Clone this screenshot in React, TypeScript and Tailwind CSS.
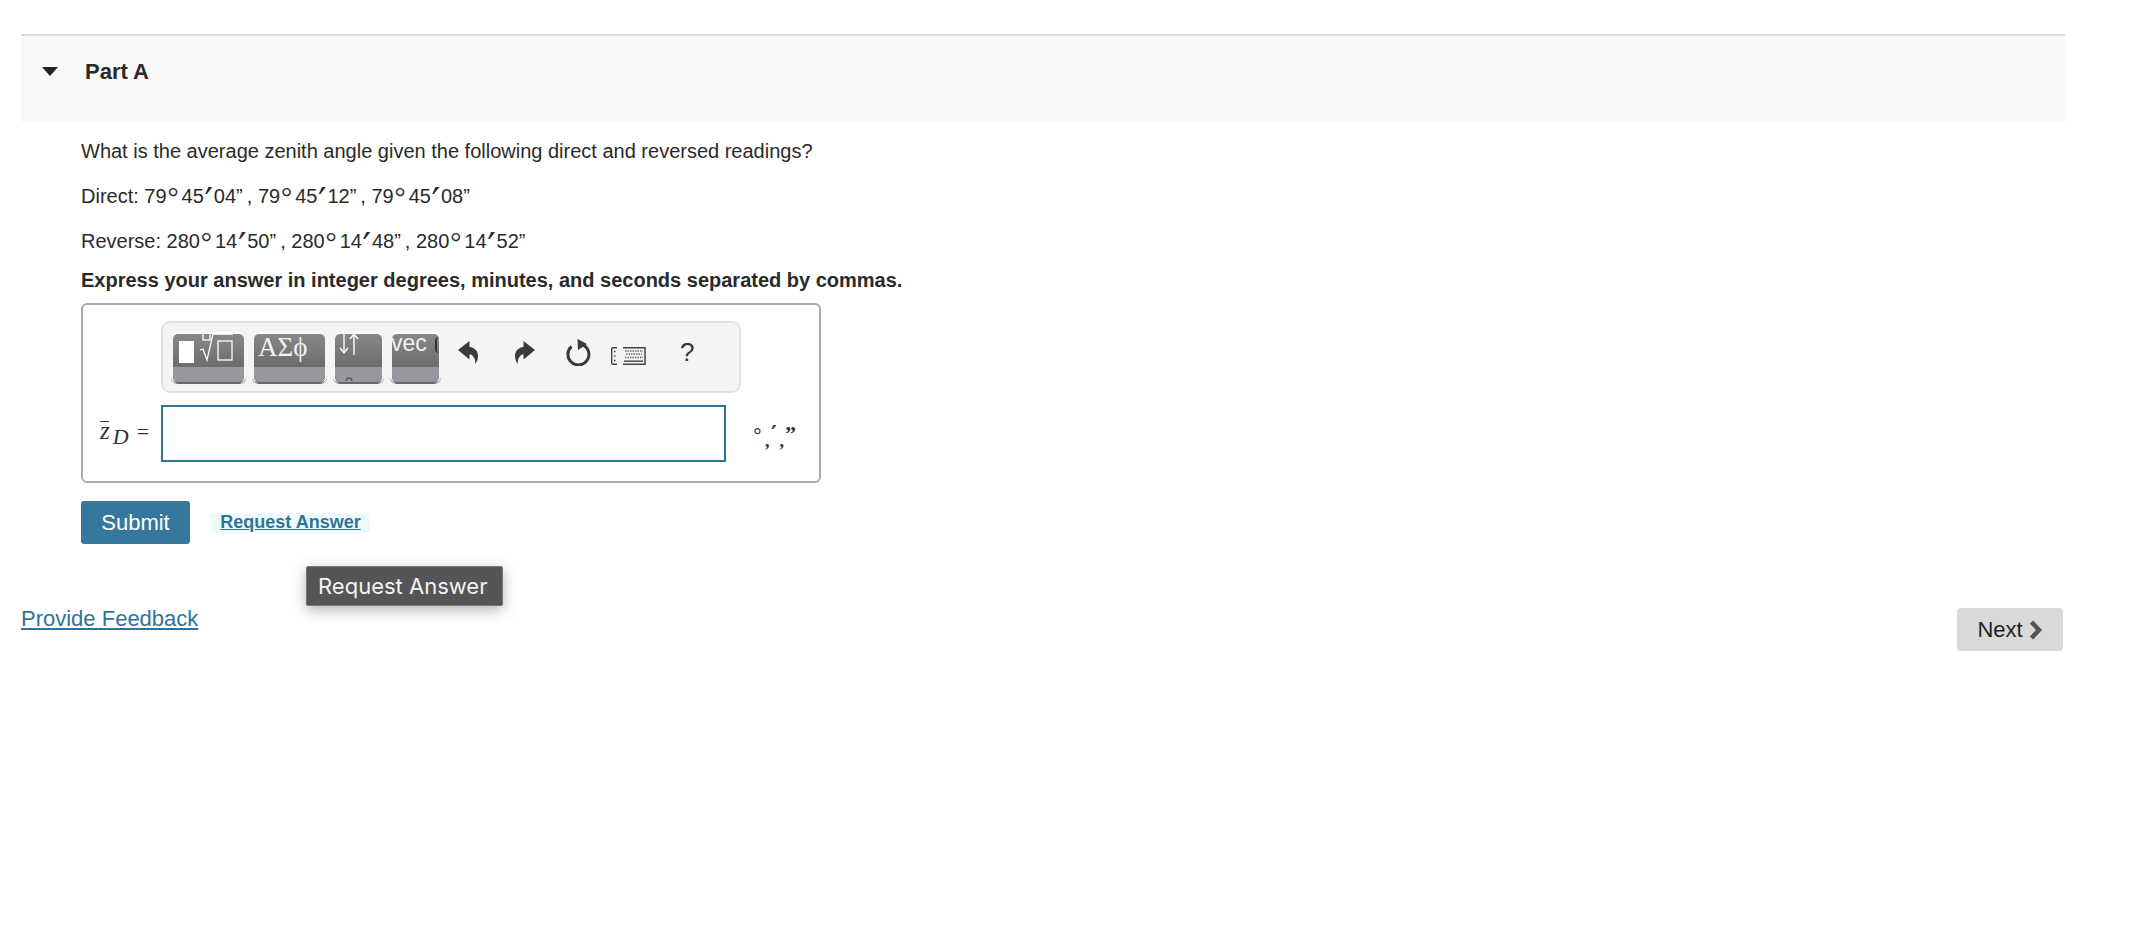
function Reading({ d, m, s }: { d: string; m: string; s: string }) {
  return (
    <span>
      {d}
      <span className="relative top-[3px] inline-block w-[15px] pr-[2px] text-center font-['Liberation_Serif',serif] text-[28px] leading-[10px]">°</span>
      {m}
      <span className="relative top-[11px] inline-block w-[10px] text-center font-['DejaVu_Sans',sans-serif] text-[38px] leading-[10px]">′</span>
      {s}
      <span className="mr-[4px]">”</span>
    </span>
  );
}

function ToolButton({ width, children }: { width: string; children: React.ReactNode }) {
  return (
    <div className={`${width} relative h-[51px] shrink-0 overflow-hidden rounded-[7px] border-x-2 border-t-2 border-x-[#f6f6f6] border-t-white bg-[linear-gradient(#88888b,#5e5e5e)] shadow-[0_1px_0_#6a6a6a]`}>
      {children}
      <div className="absolute bottom-[1px] left-0 right-0 h-[15px] rounded-b-[5px] bg-[#98969f]" />
      <div className="absolute bottom-0 left-0 right-0 h-[1px] bg-[#666]" />
    </div>
  );
}

function UndoIcon() {
  return (
    <svg width="20" height="23" viewBox="0 0 20 23">
      <path d="M0 9L11.5 0v6C17 6.5 20 10.5 20 15c0 3-1 6-3 8 .6-3-.2-6-1.800-7.600C14 14 13 13.500 11.500 13.300V18.500z" fill="#3a3a3a" />
    </svg>
  );
}

function RedoIcon() {
  return (
    <svg width="20" height="23" viewBox="0 0 20 23">
      <path d="M20 9L8.500 0v6C3 6.500 0 10.500 0 15c0 3 1 6 3 8-.6-3 .2-6 1.800-7.600C6 14 7 13.500 8.500 13.300V18.500z" fill="#3a3a3a" />
    </svg>
  );
}

function ResetIcon() {
  return (
    <svg width="26" height="27" viewBox="0 0 26 27" fill="none">
      <path d="M5.500 7.500A10.500 10.500 0 1 0 14 5" stroke="#3a3a3a" strokeWidth="3" />
      <path d="M11.500 0L21 5l-9 6z" fill="#3a3a3a" />
    </svg>
  );
}

function KeyboardIcon() {
  return (
    <svg width="35" height="18" viewBox="0 0 35 18" fill="none">
      <path d="M6 .7H2Q.7.700 .7 2v14q0 1.300 1.300 1.300h4" stroke="#444" strokeWidth="1.400" />
      <path d="M3 4.500h1.500M3 9h1.500M3 13.500h1.500" stroke="#444" strokeWidth="1.600" />
      <path d="M12 .8h22v16.400H12" stroke="#444" strokeWidth="1.500" />
      <path d="M14 4h18M15 7h16M14 10.500h18" stroke="#666" strokeWidth="1.500" strokeDasharray="1.500 1" />
      <path d="M13 14.200h19" stroke="#555" strokeWidth="1.600" />
    </svg>
  );
}

export default function App() {
  return (
    <div className="relative h-[925px] w-full overflow-hidden bg-white pl-[21px] pr-[69px] pt-[34px] font-['Liberation_Sans',Arial,sans-serif] text-[#2a2a2a]">
      <section className="border-t-2 border-[#dcdcdc]">
        <div className="flex h-[86px] items-start bg-[#f9f9f9]">
          <div className="ml-[21px] mt-[31px] h-0 w-0 border-x-[8.5px] border-t-[9px] border-x-transparent border-t-[#222]" />
          <h2 className="ml-[27px] mt-[23px] text-[22px] font-bold leading-[26px]">Part A</h2>
        </div>

        <div className="pl-[60px]">
          <p className="pt-[17px] text-[20px] leading-[24px]">What is the average zenith angle given the following direct and reversed readings?</p>
          <p className="mt-[19px] text-[20px] leading-[28px]">
            Direct: <Reading d="79" m="45" s="04" />, <Reading d="79" m="45" s="12" />, <Reading d="79" m="45" s="08" />
          </p>
          <p className="mt-[17px] text-[20px] leading-[28px]">
            Reverse: <Reading d="280" m="14" s="50" />, <Reading d="280" m="14" s="48" />, <Reading d="280" m="14" s="52" />
          </p>
          <p className="mt-[13px] text-[20px] font-bold leading-[24px]">Express your answer in integer degrees, minutes, and seconds separated by commas.</p>

          <div className="mt-[11px] h-[180px] w-[740px] rounded-[6px] border-2 border-[#aaaaaa] bg-white">
            <div className="ml-[78px] mt-[16px] flex h-[72px] w-[580px] items-start rounded-[9px] border-2 border-[#e2e2e2] bg-[#f4f4f4] pl-[8px] pt-[9px]">
              <ToolButton width="w-[75px]">
                <div className="absolute left-[6px] top-[7px] h-[22px] w-[15px] bg-white" />
                <svg className="absolute left-[26px] top-[-2px]" width="42" height="32" viewBox="0 0 42 32" fill="none" stroke="white" strokeWidth="1.3">
                  <rect x="4" y="0" width="7" height="8" />
                  <path d="M1 18l3-1 4 11 6-26h20" />
                  <rect x="19" y="9" width="14" height="19" />
                </svg>
              </ToolButton>
              <div className="w-[6px]" />
              <ToolButton width="w-[75px]">
                <span className="absolute left-[4px] top-[-2px] font-['Liberation_Serif',serif] text-[27px] leading-[30px] text-[#f1f1f1]">ΑΣϕ</span>
              </ToolButton>
              <div className="w-[6px]" />
              <ToolButton width="w-[51px]">
                <svg className="absolute left-[3px] top-[-3px]" width="24" height="26" viewBox="0 0 24 26" fill="none" stroke="white" strokeWidth="1.4">
                  <path d="M6 2v20M2 17l4 5 4-5" />
                  <path d="M16 24V3M12 8l4-5 4 5" />
                </svg>
                <svg className="absolute bottom-[1px] left-[10px] z-10" width="8" height="5" viewBox="0 0 8 5" fill="none" stroke="#444" strokeWidth="1.2">
                  <path d="M1 4a3 3 0 0 1 6 0" />
                </svg>
              </ToolButton>
              <div className="w-[6px]" />
              <ToolButton width="w-[51px]">
                <span className="absolute left-[-1px] top-[-5px] text-[23px] leading-[28px] text-[#f1f1f1]">vec</span>
                <div className="absolute left-[43px] top-[3px] h-[16px] w-[4px] rounded-l-full border-l-2 border-[#333]" />
              </ToolButton>
              <div className="ml-[17px] flex h-[50px] items-start">
                <div className="mt-[9px]"><UndoIcon /></div>
                <div className="ml-[37px] mt-[9px]"><RedoIcon /></div>
                <div className="ml-[31px] mt-[7px]"><ResetIcon /></div>
                <div className="ml-[19px] mt-[15px]"><KeyboardIcon /></div>
                <span className="ml-[34px] mt-[5px] text-[26px] leading-[30px] text-[#333]">?</span>
              </div>
            </div>

            <div className="mt-[12px] flex h-[57px] items-center">
              <span className="ml-[17px] flex w-[61px] items-start whitespace-nowrap font-['Liberation_Serif',serif] text-[#333]">
                <span className="relative text-[25px] italic leading-[28px]">
                  z
                  <span className="absolute left-0 top-[4px] h-[1px] w-[9px] bg-[#444]" />
                </span>
                <span className="ml-[3px] mt-[6px] text-[22px] italic leading-[28px]">D</span>
                <span className="ml-[8px] mt-[1px] text-[22px] leading-[28px]">=</span>
              </span>
              <input className="h-[57px] w-[565px] rounded-none border-2 border-[#2f7498] bg-white outline-none" />
              <div className="ml-[27px] mt-[-8px] text-[#333]">
                <div className="flex h-[15px] items-center text-[22px] leading-[15px]">
                  <span className="relative top-[12px] w-[18px] pt-[5px]">°</span>
                  <span className="relative top-[11px] w-[14px] font-['DejaVu_Sans',sans-serif] text-[22px] font-bold">′</span>
                  <span className="relative top-[8px] pt-[7px] font-['Liberation_Serif',serif] font-bold">”</span>
                </div>
                <div className="relative top-[4px] flex gap-[10px] pl-[12px] font-['Liberation_Serif',serif] text-[18px] font-bold leading-[15px]">
                  <span>,</span>
                  <span>,</span>
                </div>
              </div>
            </div>
          </div>

          <div className="mt-[18px] flex items-center">
            <button className="h-[43px] w-[109px] rounded-[3px] bg-[#36789b] text-[22px] text-white">Submit</button>
            <a href="#" className="ml-[21px] flex h-[20px] w-[159px] items-center justify-center bg-[#eef9fd] text-[18px] font-bold text-[#2f7498] underline">Request Answer</a>
          </div>
        </div>
      </section>

      <div className="absolute left-[306px] top-[566px] flex h-[40px] w-[197px] items-center rounded-[2px] border border-[#777] bg-[#555555] pl-[11px] font-['Inter',sans-serif] text-[22px] text-[#f2f2f2] shadow-[0_4px_14px_rgba(0,0,0,0.3)]">
        Request Answer
      </div>

      <footer className="mr-[2px] mt-[62px] flex items-start justify-between">
        <a href="#" className="pt-[1px] text-[22px] leading-[24px] text-[#2f7498] underline">Provide Feedback</a>
        <button className="mt-[2px] flex h-[43px] w-[106px] items-center justify-center gap-[6px] rounded-[4px] bg-[#d9d9d9] text-[22px] text-[#222]">
          Next
          <svg width="14" height="20" viewBox="0 0 14 20" fill="none" stroke="#555" strokeWidth="4.5"><path d="M2.5 2l7.5 8-7.5 8" /></svg>
        </button>
      </footer>
    </div>
  );
}
